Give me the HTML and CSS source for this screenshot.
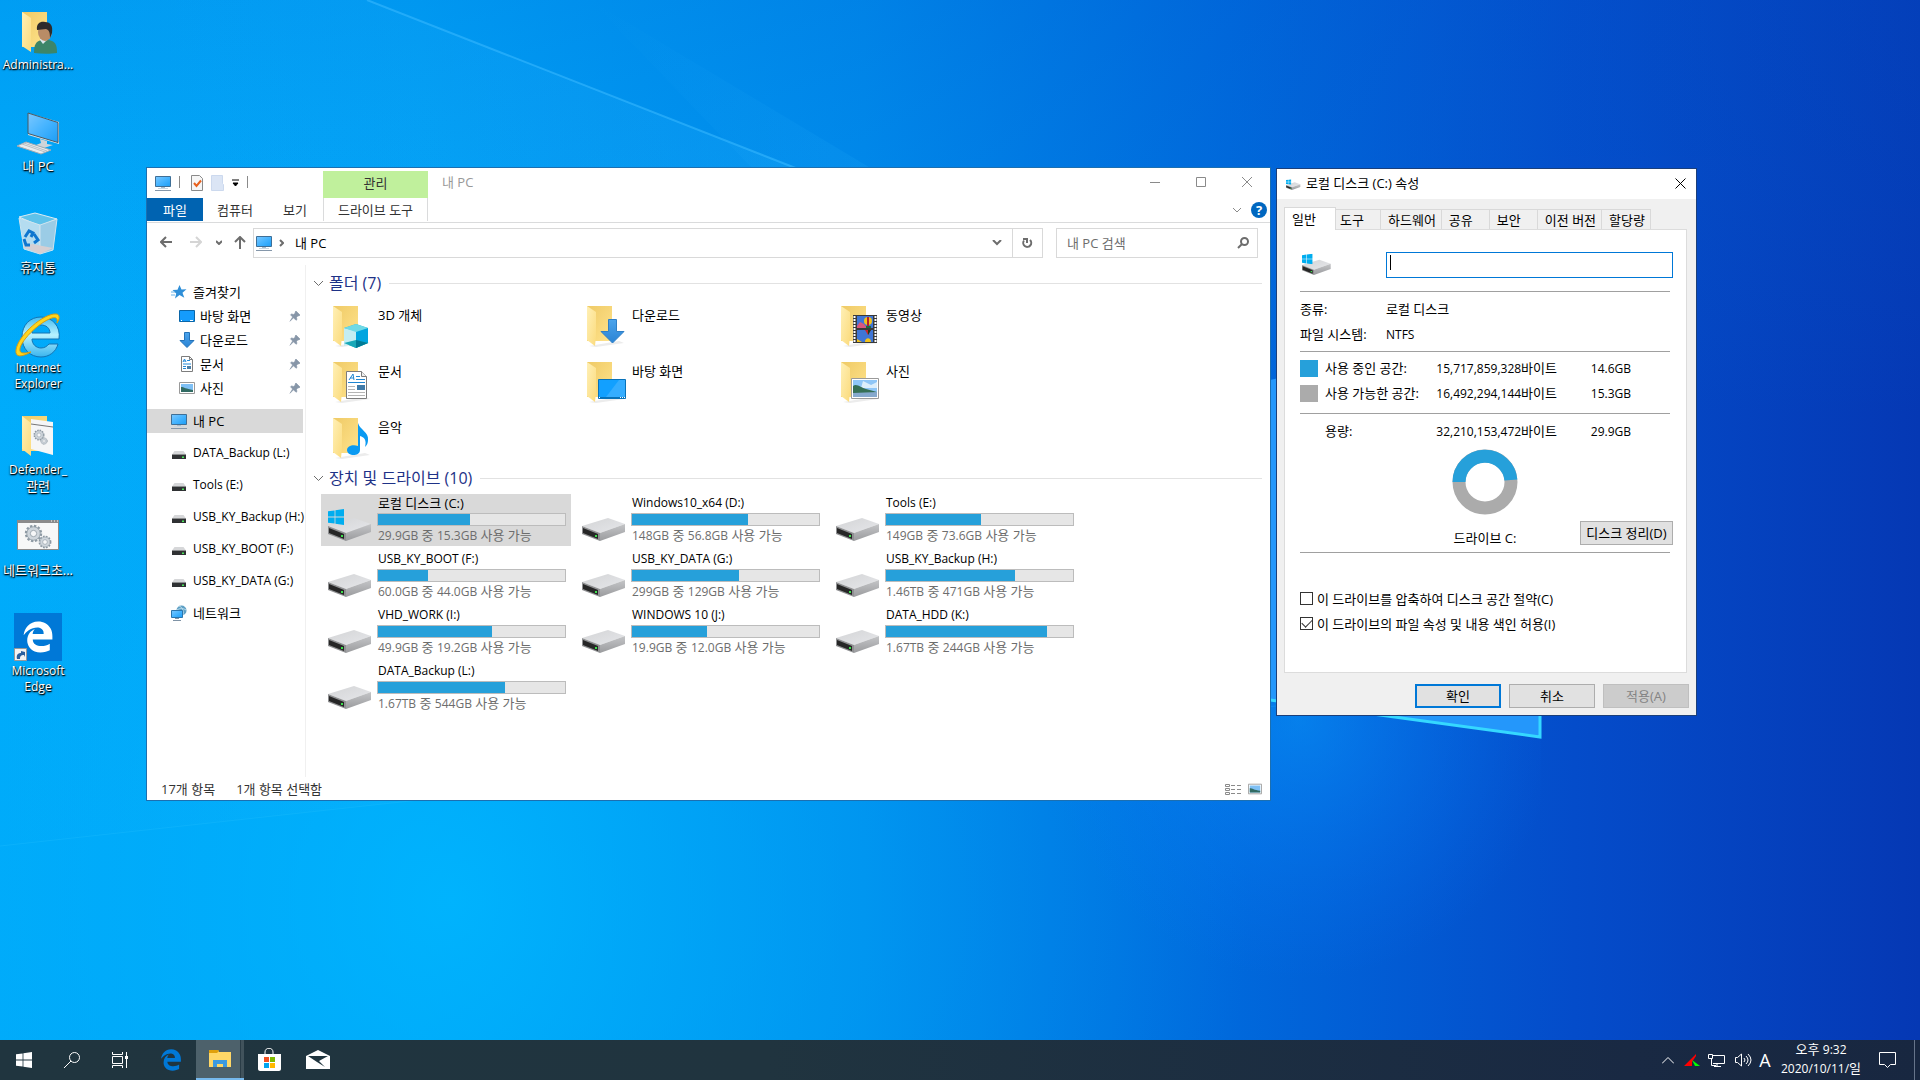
FILE: index.html
```html
<!DOCTYPE html>
<html lang="ko">
<head>
<meta charset="utf-8">
<title>내 PC</title>
<link rel="stylesheet" href="styles.css">
</head>
<body>
<svg class="defs" aria-hidden="true">
  <defs>
    <linearGradient id="gFold" x1="0" y1="0" x2="1" y2="1"><stop offset="0" stop-color="#efca66"/><stop offset="1" stop-color="#ffe38c"/></linearGradient>
    <linearGradient id="gFlap" x1="0" y1="0" x2="1" y2="1"><stop offset="0" stop-color="#fff0b6"/><stop offset="1" stop-color="#fbdb7d"/></linearGradient>
    <linearGradient id="gScreen" x1="0" y1="0" x2="1" y2="1"><stop offset="0" stop-color="#7cc8ff"/><stop offset=".5" stop-color="#46b4ff"/><stop offset="1" stop-color="#1c9df5"/></linearGradient>
    <linearGradient id="gTop" x1="0" y1="0" x2="1" y2="1"><stop offset="0" stop-color="#d3d4d6"/><stop offset="1" stop-color="#e6e7ea"/></linearGradient>
    <linearGradient id="gSide" x1="0" y1="0" x2="0" y2="1"><stop offset="0" stop-color="#c4c5c7"/><stop offset="1" stop-color="#9a9b9e"/></linearGradient>
    <linearGradient id="gIe" x1="0" y1="0" x2="0" y2="1"><stop offset="0" stop-color="#44bdf2"/><stop offset=".45" stop-color="#b8f2ff"/><stop offset="1" stop-color="#3ab5ee"/></linearGradient>
    <linearGradient id="gDown" x1="0" y1="0" x2="0" y2="1"><stop offset="0" stop-color="#4ba4ec"/><stop offset="1" stop-color="#2a83d4"/></linearGradient>
  </defs>
  <symbol id="pc" viewBox="0 0 16 16"><path d="M.5 1.500h15v10H.5z" fill="url(#gScreen)" stroke="#3f6f96"/><path d="M6 12h4v1.500H6z" fill="#a9bccb"/><path d="M3 13h10v1H3z" fill="#c9d6e0"/><path d="M0 15h16v1H0z" fill="#8597aa"/></symbol>
  <symbol id="folder" viewBox="0 0 48 48"><path d="M10 45l7 1 28-4-5-2z" fill="#ececec"/><path d="M8 5h25v35H8z" fill="url(#gFold)"/><path d="M8 5l9 6v24l-1 10-8-6z" fill="url(#gFlap)"/></symbol>
  <symbol id="drive" viewBox="0 0 48 48"><path d="M3 30l26-8 17 6-25 9z" fill="url(#gTop)"/><path d="M21 37l25-9v8l-25 9z" fill="url(#gSide)"/><path d="M3 30l18 7v8L3 38z" fill="#8f9092"/><path d="M4 32l15 6v5L4 37z" fill="#262626"/><path d="M16 39h2v2h-2z" fill="#3be04b"/></symbol>
  <symbol id="winflag" viewBox="0 0 16 16"><path d="M0 2.300l6.600-.9v6.200H0zM7.400 1.300L16 0v7.600H7.400zM0 8.400h6.600v6.200L0 13.700zM7.400 8.400H16V16l-8.600-1.300z"/></symbol>
  <symbol id="cdrive" viewBox="0 0 48 48"><use href="#drive"/><use href="#winflag" x="3" y="13" width="16" height="16" fill="#00adef"/></symbol>
  <symbol id="minidrive" viewBox="0 0 16 16"><path d="M2.500 6h9L14 9.500H0z" fill="#d6d7d9"/><path d="M0 9.500h14V14H0z" fill="#2f3133"/><path d="M10 11.500h2v1.500h-2z" fill="#4be35a"/></symbol>
  <symbol id="doc" viewBox="0 0 16 16"><path d="M2.500.5h8l3 3v12h-11z" fill="#fff" stroke="#7d7d7d"/><path d="M10.500.5v3h3" fill="none" stroke="#7d7d7d"/><path d="M4 6l1.500-3L7 6M4.500 5h2M8 4.500h3M4 8h8M4 10.500h3M4 12.500h3" stroke="#2389d8" fill="none"/><path d="M8 10h4v3H8z" fill="#4a7da5"/></symbol>
  <symbol id="pic" viewBox="0 0 16 16"><path d="M.5 2.500h15v11H.5z" fill="#fff" stroke="#999"/><path d="M2 4h12v8H2z" fill="#7fc0f5"/><path d="M2 7c3 0 5 2 12 3v2H2z" fill="#316b63"/></symbol>
  <symbol id="pin" viewBox="0 0 12 12"><path d="M7 1l4 4-1 1-1-.3L7.500 7.500 8 9.500l-1 .8-2.500-2.500L1 11.300 3.600 7 1.500 4.800l1-.8 2.200.4L6.300 3 6 2z" fill="#8796a8" stroke="#8796a8" stroke-width=".6"/></symbol>
  <symbol id="gear" viewBox="0 0 24 24"><circle cx="12" cy="12" r="9.500" fill="none" stroke="#8d99a3" stroke-width="3" stroke-dasharray="3 2"/><circle cx="12" cy="12" r="8.500" fill="#cfd6dc" stroke="#8d99a3"/><circle cx="12" cy="12" r="4" fill="#f6f7f8" stroke="#8d99a3"/></symbol>
  <symbol id="edge" viewBox="0 0 512 512"><path d="M25.700 228.200l.4-.5c0 .2 0 .3-.1.500zm460.600 15.500c0-44-7.800-84.500-28.800-122.400C416.500 47.900 343.900 8 258.900 8 119 7.700 40.600 113.200 26.100 227.700c42.400-61.300 117-121.400 220.300-125 0 0 109.700 0 99.400 105H170c6.400-37.400 18.500-59 34.300-78.900-75 34.900-121.800 96.100-120.700 188.300.8 71.500 50.100 144.800 120.700 172 83.400 31.800 192.800 7.200 240.200-21.300V363.300c-80.900 56.500-270.900 60.900-272.300-67.600h314.100z"/></symbol>
</svg>

<main class="desktop">
  <svg class="wallpaper" viewBox="0 0 1920 1040" preserveAspectRatio="none" aria-hidden="true">
    <defs>
      <linearGradient id="wBase" x1="0" y1="0" x2="1" y2="0"><stop offset="0" stop-color="#00aefc"/><stop offset=".22" stop-color="#00a6f8"/><stop offset=".45" stop-color="#008cec"/><stop offset=".64" stop-color="#0069dc"/><stop offset=".82" stop-color="#044cca"/><stop offset="1" stop-color="#0538b4"/></linearGradient>
      <linearGradient id="wTop" x1="0" y1="0" x2="0" y2="1"><stop offset="0" stop-color="#005cd0" stop-opacity=".2"/><stop offset=".4" stop-color="#0078dc" stop-opacity="0"/></linearGradient>
      <radialGradient id="wGlow" gradientUnits="userSpaceOnUse" cx="450" cy="900" r="800"><stop offset="0" stop-color="#00b8ff" stop-opacity=".75"/><stop offset="1" stop-color="#0098f0" stop-opacity="0"/></radialGradient>
      <linearGradient id="wRay" x1="0" y1="0" x2="1" y2="0"><stop offset="0" stop-color="#36b9ff" stop-opacity="0"/><stop offset="1" stop-color="#20b4ff" stop-opacity=".3"/></linearGradient>
      <radialGradient id="wPane" gradientUnits="userSpaceOnUse" cx="1300" cy="720" r="260"><stop offset="0" stop-color="#0a9cff" stop-opacity=".5"/><stop offset="1" stop-color="#0a7cff" stop-opacity="0"/></radialGradient>
    </defs>
    <path d="M0 0h1920v1040H0z" fill="url(#wBase)"/>
    <path d="M0 0h1920v1040H0z" fill="url(#wTop)"/>
    <path d="M0 0h1920v1040H0z" fill="url(#wGlow)"/>
    <path d="M367 0l904 355v351L0 846V0z" fill="url(#wRay)"/>
    <path d="M590 0l681 408v298z" fill="url(#wRay)"/>
    <path d="M367 0l500 196" stroke="#37b8ff" stroke-width="2" opacity=".6"/>
    <path d="M0 846l1276-140" stroke="#29c4ff" stroke-width="1" opacity=".25"/>
    <path d="M900 500h641v540H900z" fill="url(#wPane)"/>
    <path d="M1270 380l271-60v417l-271-37z" fill="#2497fb"/>
    <path d="M1270 700l270 37V600" fill="none" stroke="#35d8ff" stroke-width="3"/>
  </svg>

  <nav class="shortcuts" aria-label="바탕 화면">
    <a class="shortcut" href="#admin"><svg viewBox="0 0 48 48"><path d="M8 5h25v35H8z" fill="url(#gFold)"/><path d="M8 5l9 6v34l-9-6z" fill="url(#gFlap)"/><path d="M20 46c0-9 2-11 7-13l5-1 6 2c4 2 5 5 5 12-6 1-15 1-23 0z" fill="#3c8568"/><path d="M26 33l3 4 4-4v-5h-6z" fill="#dce7ec"/><ellipse cx="31" cy="25" rx="7" ry="9" fill="#b98c66"/><path d="M23 23c-1-7 4-9 8-8 6 0 8 4 7 11l-2 5c0-6-1-8-4-9-3 0-6 1-9 1z" fill="#2d2b2b"/></svg><span class="latin">Administra...</span></a>
    <a class="shortcut" href="#pc"><svg viewBox="0 0 48 48"><path d="M14 5l31 9v22l-31-9z" fill="#dfe3e6"/><path d="M14 5l30 9.500v20L14 25.500z" fill="url(#gScreen)" stroke="#4b5962"/><path d="M26 31l7 2v3l6 1-9 3-8-3 5-2z" fill="#cfd5d9"/><path d="M12 34l25 8-10 4L3 38z" fill="#e8ebed" stroke="#a2abb2"/><path d="M8 36l23 8M10 35l23 8" stroke="#b7bfc5"/></svg><span>내 PC</span></a>
    <a class="shortcut" href="#bin"><svg viewBox="0 0 48 48"><path d="M5 8l16-4 22 6-17 7z" fill="#5fc2ea" stroke="#dcebf3"/><path d="M5 9l21 7v29l-16-5z" fill="#b4dcf0" stroke="#cfe4ef"/><path d="M26 16l17-6-4 31-13 4z" fill="#9bcce6" stroke="#cfe4ef"/><path d="M9 38l9-3 21 4-13 6z" fill="#d6cfd2"/><path d="M11 28l4-6 4 2-2 4M20 25l4 6-4 3M10 30l2 6h4" stroke="#0f76cf" stroke-width="3" fill="none"/></svg><span>휴지통</span></a>
    <a class="shortcut" href="#ie"><svg viewBox="0 0 48 48"><path d="M45 29H18c0 5 4 9 9 9 4 0 6-2 8-4h9c-2 8-9 13-17 13-11 0-19-8-19-20S16 7 27 7s20 9 18 22zM18 23h18c0-5-4-8-9-8s-9 3-9 8z" fill="url(#gIe)" stroke="#1475b4"/><path d="M17 42C8 47 1 48 2 40 4 25 30 3 42 4c4 0 4 5 1 9 1-5-1-6-5-5C25 12 4 33 6 41c1 3 6 2 11 1z" fill="#ffd51d" stroke="#d79d10"/></svg><span class="latin">Internet Explorer</span></a>
    <a class="shortcut" href="#defender"><svg viewBox="0 0 48 48"><path d="M8 5h25v35H8z" fill="url(#gFold)"/><path d="M17 8l22 3v33l-22-6z" fill="#f5f6f7"/><path d="M17 13l22 3" stroke="#777"/><path d="M8 5l9 7v33l-9-7z" fill="url(#gFlap)"/><use href="#gear" x="19" y="18" width="12" height="12"/><use href="#gear" x="26" y="26" width="8" height="8"/></svg><span><i>Defender_</i><br>관련</span></a>
    <a class="shortcut" href="#net"><svg viewBox="0 0 48 48"><path d="M3.500 8.500h41v29h-41z" fill="#f7f8f8" stroke="#8b8b8b"/><path d="M3 8h42v3H3z" fill="#8b8b8b"/><path d="M37 9h1M40 9h1M43 9h1" stroke="#fff"/><use href="#gear" x="10" y="12" width="19" height="19"/><use href="#gear" x="24" y="23" width="14" height="14"/></svg><span>네트워크초...</span></a>
    <a class="shortcut" href="#edge"><svg viewBox="0 0 48 48"><path d="M0 0h48v48H0z" fill="#0078d7"/><use href="#edge" x="8" y="8" width="32" height="32" fill="#fff"/><path d="M.5 35.500h12v12H.5z" fill="#f3f3f3" stroke="#999"/><path d="M3 46c-1-4 1-6 4-6v-2l4 1v5l-1-2c-3 0-4 1-4 4z" fill="#2b5f9e"/></svg><span class="latin">Microsoft Edge</span></a>
  </nav>

  <section class="window explorer" aria-label="내 PC">
    <header class="titlebar">
      <div class="quick">
        <svg width="16" height="16"><use href="#pc"/></svg><b></b>
        <svg width="12" height="16" viewBox="0 0 12 16"><path d="M.5.5h8l3 3v12H.5z" fill="#f6f6f6" stroke="#8a8a8a"/><path d="M3 8l2.500 3L10 5.500" fill="none" stroke="#e8601c" stroke-width="2"/></svg>
        <svg width="13" height="16" viewBox="0 0 13 16"><path d="M.5.500h11v8l1 1v6H.5z" fill="#dbe5f5" stroke="#ccd9ee"/></svg>
        <svg width="7" height="8" viewBox="0 0 7 8"><path d="M0 1h7M1 4h5L3.500 7z" stroke="#000" fill="#000"/></svg><b></b>
      </div>
      <div class="manage">관리</div>
      <h1>내 PC</h1>
      <div class="controls">
        <button aria-label="최소화"><svg width="10" height="10" viewBox="0 0 10 10"><path d="M0 5.500h10" stroke="#8a8a8a"/></svg></button>
        <button aria-label="최대화"><svg width="10" height="10" viewBox="0 0 10 10"><path d="M.5.500h9v9h-9z" stroke="#8a8a8a" fill="none"/></svg></button>
        <button aria-label="닫기"><svg width="10" height="10" viewBox="0 0 10 10"><path d="M0 0l10 10M10 0L0 10" stroke="#8a8a8a"/></svg></button>
      </div>
    </header>
    <div class="ribbon">
      <button class="file">파일</button>
      <button class="computer">컴퓨터</button>
      <button class="view">보기</button>
      <button class="tools">드라이브 도구</button>
      <span class="ribbon-end">
        <svg width="10" height="6" viewBox="0 0 10 6"><path d="M1 1l4 4 4-4" stroke="#8a8a8a" fill="none"/></svg>
        <button class="help" aria-label="도움말">?</button>
      </span>
    </div>
    <div class="navbar">
      <button class="nav" aria-label="뒤로"><svg width="12" height="12" viewBox="0 0 12 12"><path d="M12 6H1M6 1L1 6l5 5" stroke="#6d6d6d" stroke-width="2" fill="none"/></svg></button>
      <button class="nav" aria-label="앞으로"><svg width="12" height="12" viewBox="0 0 12 12"><path d="M0 6h11M6 1l5 5-5 5" stroke="#d5d5d5" stroke-width="2" fill="none"/></svg></button>
      <button class="nav slim" aria-label="최근 위치"><svg width="6" height="5" viewBox="0 0 6 5"><path d="M0 1l3 3 3-3" stroke="#6d6d6d" stroke-width="2" fill="none"/></svg></button>
      <button class="nav up" aria-label="위로"><svg width="12" height="13" viewBox="0 0 12 13"><path d="M6 13V1M1 6l5-5 5 5" stroke="#6d6d6d" stroke-width="2" fill="none"/></svg></button>
      <div class="address">
        <svg width="16" height="16"><use href="#pc"/></svg>
        <svg width="5" height="8" viewBox="0 0 5 8"><path d="M1 1l3 3-3 3" stroke="#6d6d6d" stroke-width="2" fill="none"/></svg>
        <span>내 PC</span>
        <button class="nav" aria-label="이전 위치"><svg width="10" height="6" viewBox="0 0 10 6"><path d="M1 0l4 4 4-4" stroke="#6d6d6d" stroke-width="2" fill="none"/></svg></button>
        <button class="nav refresh" aria-label="새로 고침"><svg width="11" height="12" viewBox="0 0 11 12"><path d="M8 3a4 4 0 1 1-6 .5M1 2h4v4" stroke="#6d6d6d" stroke-width="2" fill="none"/></svg></button>
      </div>
      <div class="search">
        <input type="search" placeholder="내 PC 검색" aria-label="내 PC 검색">
        <svg width="12" height="12" viewBox="0 0 12 12"><circle cx="7.500" cy="4.500" r="3.500" stroke="#6d6d6d" stroke-width="2" fill="none"/><path d="M5 7l-4 4" stroke="#6d6d6d" stroke-width="2"/></svg>
      </div>
    </div>

    <div class="body">
      <nav class="tree" aria-label="탐색">
        <a href="#fav"><svg width="16" height="16" viewBox="0 0 16 16"><path d="M8.500 1l2 4.500 5-.3-4 3.600 1.800 5L8.500 11 4 14.500l1.200-5L1.500 6l5-.3z" fill="#2f8fd8"/><path d="M0 8h4M0 11h4" stroke="#69b4e8"/></svg>즐겨찾기</a>
        <a class="child" href="#desk"><svg width="16" height="16" viewBox="0 0 16 16"><path d="M.5 2.500h15v11H.5z" fill="#159cfc" stroke="#0a66a8"/><path d="M2 12.500h1M11 12.500h3" stroke="#fff"/></svg>바탕 화면<svg class="pin"><use href="#pin"/></svg></a>
        <a class="child" href="#down"><svg width="16" height="16" viewBox="0 0 16 16"><path d="M5.500.5h5v8h4.500l-7 7-7-7h4.500z" fill="url(#gDown)" stroke="#2372b8"/></svg>다운로드<svg class="pin"><use href="#pin"/></svg></a>
        <a class="child" href="#docs"><svg width="16" height="16"><use href="#doc"/></svg>문서<svg class="pin"><use href="#pin"/></svg></a>
        <a class="child" href="#pics"><svg width="16" height="16"><use href="#pic"/></svg>사진<svg class="pin"><use href="#pin"/></svg></a>
        <a class="current" href="#pc"><svg width="16" height="16"><use href="#pc"/></svg>내 PC</a>
        <a class="tall latin" href="#l"><svg width="16" height="16"><use href="#minidrive" x="1"/></svg>DATA_Backup (L:)</a>
        <a class="tall latin" href="#e"><svg width="16" height="16"><use href="#minidrive" x="1"/></svg>Tools (E:)</a>
        <a class="tall latin" href="#h"><svg width="16" height="16"><use href="#minidrive" x="1"/></svg>USB_KY_Backup (H:)</a>
        <a class="tall latin" href="#f"><svg width="16" height="16"><use href="#minidrive" x="1"/></svg>USB_KY_BOOT (F:)</a>
        <a class="tall latin" href="#g"><svg width="16" height="16"><use href="#minidrive" x="1"/></svg>USB_KY_DATA (G:)</a>
        <a class="tall" href="#network"><svg width="16" height="16" viewBox="0 0 16 16"><circle cx="10.500" cy="5.500" r="5" fill="#5d9fc4"/><path d="M8 1c3 1 5 4 4 9M6 5c3-2 6-2 9 0" stroke="#b9dced" fill="none"/><path d="M.5 5.500h11v7H.5z" fill="url(#gScreen)" stroke="#2a75ad"/><path d="M4 13h4v1H4zM2 15h8v1H2z" fill="#7f93a6"/></svg>네트워크</a>
      </nav>

      <div class="content">
        <h2><svg width="11" height="7" viewBox="0 0 11 7"><path d="M1 1l4.500 4.500L10 1" stroke="#6d6d6d" fill="none"/></svg>폴더 (7)</h2>
        <div class="tiles folders">
          <a class="tile" href="#3d"><svg class="big" viewBox="0 0 48 48"><use href="#folder"/><path d="M19 27l12-4 12 4v15l-12 5-12-5z" fill="#27b9cf"/><path d="M19 27l12 3v12l-12 3z" fill="#c3edf2"/><path d="M31 30l12-3v15l-12-2z" fill="#00a5e0"/><path d="M19 27l12-4 12 4-12 4z" fill="#6fd9e6"/><path d="M19 42l12-3 12 3-12 5z" fill="#18a8b8"/><path d="M31 39l12 3-12 5z" fill="#007b96"/></svg><span class="name">3D 개체</span></a>
          <a class="tile" href="#down"><svg class="big" viewBox="0 0 48 48"><use href="#folder"/><path d="M29.500 18.500h8v12h7.500L33.500 42 22 30.500h7.500z" fill="url(#gDown)" stroke="#2f7fc6"/></svg><span class="name">다운로드</span></a>
          <a class="tile" href="#video"><svg class="big" viewBox="0 0 48 48"><use href="#folder"/><path d="M20 14h24v28H20z" fill="#3a3a3a"/><path d="M21.500 15v26M42.500 15v26" stroke="#fff" stroke-width="2" stroke-dasharray="2 1"/><path d="M24 15h16v12H24zM24 29h16v12H24z" fill="#3f76d6"/><path d="M24 25l3-4 4 2 3 4H24z" fill="#d8577d"/><circle cx="35" cy="20" r="4" fill="#f2c21c"/><path d="M35 16v8M34 25h2" stroke="#b3202c" stroke-width="2"/><path d="M33 25h5v2h-5z" fill="#1c6b3a"/><path d="M32 29h6l-3 5z" fill="#c9252c"/><path d="M35 29h3l-3 5z" fill="#1d3c1c"/><path d="M32 41c0-5 6-5 6 0zM24 38l5 3h-5z" fill="#f2c21c"/></svg><span class="name">동영상</span></a>
          <a class="tile" href="#docs"><svg class="big" viewBox="0 0 48 48"><use href="#folder"/><path d="M21.500 14.500h15l5 5v22h-20z" fill="#fff" stroke="#7c7c7c"/><path d="M36.500 14.500v5h5" fill="#eee" stroke="#7c7c7c"/><path d="M24 23l4-6 1 6M25 21h4M31 19.500h4M31 22.500h9M23 25.500h17" stroke="#1f86d2" fill="none"/><path d="M23 29.500h7M23 32.500h7M23 35.500h17M23 38.500h17" stroke="#b5b5b5"/><path d="M32 28h8v5h-8z" fill="#3f7aa8"/></svg><span class="name">문서</span></a>
          <a class="tile" href="#desk"><svg class="big" viewBox="0 0 48 48"><use href="#folder"/><path d="M19.500 22.500h27v19h-27z" fill="#12a0ff" stroke="#0872b9"/><path d="M27 40l13-17h6v17z" fill="#35adff"/><path d="M20 40.500h26" stroke="#0872b9"/><path d="M20 40.500h1M41 40.500h1M43 40.500h1M45 40.500h1" stroke="#fff"/></svg><span class="name">바탕 화면</span></a>
          <a class="tile" href="#pics"><svg class="big" viewBox="0 0 48 48"><use href="#folder"/><path d="M18.500 21.500h27v20h-27z" fill="#fff" stroke="#9a9a9a"/><path d="M20 23h24v17H20z" fill="#8fc6f7"/><path d="M30 24l8 4 6-3v6H28z" fill="#dceefb"/><path d="M20 29c4-3 8 2 13 3l11 3v2H20z" fill="#356f55"/><path d="M20 36l24-1v5H20z" fill="#86a9cd"/></svg><span class="name">사진</span></a>
          <a class="tile" href="#music"><svg class="big" viewBox="0 0 48 48"><use href="#folder"/><path d="M33 10c2 7 11 9 10 17 0 3-1 5-3 7 2-7-1-10-5-11v14c0 4-4 5-6 5-4 0-7-2-7-5 0-4 6-6 11-4z" fill="#0a9af2"/></svg><span class="name">음악</span></a>
        </div>

        <h2><svg width="11" height="7" viewBox="0 0 11 7"><path d="M1 1l4.500 4.500L10 1" stroke="#6d6d6d" fill="none"/></svg>장치 및 드라이브 (10)</h2>
        <div class="tiles">
          <a class="tile selected" href="#c"><svg class="big"><use href="#cdrive"/></svg><span class="name">로컬 디스크 (C:)</span><span class="bar"><b style="width:49%"></b></span><small><i>29.9GB</i> 중 <i>15.3GB</i> 사용 가능</small></a>
          <a class="tile" href="#d"><svg class="big"><use href="#drive"/></svg><span class="name latin">Windows10_x64 (D:)</span><span class="bar"><b style="width:62%"></b></span><small><i>148GB</i> 중 <i>56.8GB</i> 사용 가능</small></a>
          <a class="tile" href="#e"><svg class="big"><use href="#drive"/></svg><span class="name latin">Tools (E:)</span><span class="bar"><b style="width:51%"></b></span><small><i>149GB</i> 중 <i>73.6GB</i> 사용 가능</small></a>
          <a class="tile" href="#f"><svg class="big"><use href="#drive"/></svg><span class="name latin">USB_KY_BOOT (F:)</span><span class="bar"><b style="width:27%"></b></span><small><i>60.0GB</i> 중 <i>44.0GB</i> 사용 가능</small></a>
          <a class="tile" href="#g"><svg class="big"><use href="#drive"/></svg><span class="name latin">USB_KY_DATA (G:)</span><span class="bar"><b style="width:57%"></b></span><small><i>299GB</i> 중 <i>129GB</i> 사용 가능</small></a>
          <a class="tile" href="#h"><svg class="big"><use href="#drive"/></svg><span class="name latin">USB_KY_Backup (H:)</span><span class="bar"><b style="width:69%"></b></span><small><i>1.46TB</i> 중 <i>471GB</i> 사용 가능</small></a>
          <a class="tile" href="#i"><svg class="big"><use href="#drive"/></svg><span class="name latin">VHD_WORK (I:)</span><span class="bar"><b style="width:61%"></b></span><small><i>49.9GB</i> 중 <i>19.2GB</i> 사용 가능</small></a>
          <a class="tile" href="#j"><svg class="big"><use href="#drive"/></svg><span class="name latin">WINDOWS 10 (J:)</span><span class="bar"><b style="width:40%"></b></span><small><i>19.9GB</i> 중 <i>12.0GB</i> 사용 가능</small></a>
          <a class="tile" href="#k"><svg class="big"><use href="#drive"/></svg><span class="name latin">DATA_HDD (K:)</span><span class="bar"><b style="width:86%"></b></span><small><i>1.67TB</i> 중 <i>244GB</i> 사용 가능</small></a>
          <a class="tile" href="#l"><svg class="big"><use href="#drive"/></svg><span class="name latin">DATA_Backup (L:)</span><span class="bar"><b style="width:68%"></b></span><small><i>1.67TB</i> 중 <i>544GB</i> 사용 가능</small></a>
        </div>
      </div>
    </div>
    <footer class="status">
      <span>17개 항목</span><span>1개 항목 선택함</span>
      <svg width="17" height="12" viewBox="0 0 17 12"><path d="M.5 1.500h4v2h-4zM.5 5.500h4v2h-4zM.5 9.500h4v2h-4zM6 2.500h4M6 6.500h4M6 10.500h4M12 2.500h4M12 6.500h4M12 10.500h4" fill="none" stroke="#8a8a8a"/></svg>
      <svg width="14" height="14"><use href="#pic"/></svg>
    </footer>
  </section>

  <section class="window dialog" aria-label="로컬 디스크 (C:) 속성">
    <header class="dialog-title">
      <svg width="16" height="16"><use href="#cdrive"/></svg>
      <h1>로컬 디스크 (C:) 속성</h1>
      <button aria-label="닫기"><svg width="11" height="11" viewBox="0 0 11 11"><path d="M.5.500l10 10M10.500.500l-10 10" stroke="#000"/></svg></button>
    </header>
    <div class="tabs" role="tablist">
      <button role="tab" aria-selected="true" class="on">일반</button><button role="tab">도구</button><button role="tab">하드웨어</button><button role="tab">공유</button><button role="tab">보안</button><button role="tab">이전 버전</button><button role="tab">할당량</button>
    </div>
    <div class="panel">
      <div class="volume">
        <svg width="32" height="32"><use href="#cdrive"/></svg>
        <div class="field"><input type="text" aria-label="볼륨 레이블"><b class="caret"></b></div>
      </div>
      <dl>
        <dt>종류:</dt><dd>로컬 디스크</dd>
        <dt>파일 시스템:</dt><dd class="latin">NTFS</dd>
      </dl>
      <table>
        <tr><td class="key"><b class="swatch used"></b></td><th scope="row">사용 중인 공간:</th><td class="bytes"><i>15,717,859,328</i>바이트</td><td class="gb">14.6GB</td><td></td></tr>
        <tr class="second"><td class="key"><b class="swatch free"></b></td><th scope="row">사용 가능한 공간:</th><td class="bytes"><i>16,492,294,144</i>바이트</td><td class="gb">15.3GB</td><td></td></tr>
        <tr class="total"><td></td><th scope="row">용량:</th><td class="bytes"><i>32,210,153,472</i>바이트</td><td class="gb">29.9GB</td><td></td></tr>
      </table>
      <div class="chart">
        <svg width="66" height="66" viewBox="0 0 66 66"><circle cx="33" cy="33" r="26" fill="none" stroke="#ababab" stroke-width="13"/><path d="M7 33a26 26 0 0 1 51.900-2" fill="none" stroke="#26a0da" stroke-width="13"/></svg>
      </div>
      <div class="drive-row"><span>드라이브 C:</span><button class="push">디스크 정리(D)</button></div>
      <div class="checks">
        <label><input type="checkbox">이 드라이브를 압축하여 디스크 공간 절약(C)</label>
        <label><input type="checkbox" checked>이 드라이브의 파일 속성 및 내용 색인 허용(I)</label>
      </div>
    </div>
    <div class="actions">
      <button class="push default">확인</button><button class="push">취소</button><button class="push" disabled>적용(A)</button>
    </div>
  </section>
</main>

<footer class="taskbar">
  <button aria-label="시작"><svg width="16" height="16" fill="#fff"><use href="#winflag"/></svg></button>
  <button aria-label="검색"><svg width="16" height="16" viewBox="0 0 16 16"><circle cx="10.500" cy="5.500" r="5" stroke="#fff" fill="none"/><path d="M7 9l-7 7" stroke="#fff"/></svg></button>
  <button aria-label="작업 보기"><svg width="16" height="16" viewBox="0 0 16 16"><path d="M.5 4.500h10v7H.5zM.5 0v2.500h10V0M.5 16v-2.500h10V16M14.500 0v16" stroke="#fff" fill="none"/><path d="M13 4h3v3h-3z" fill="#fff"/></svg></button>
  <button class="app" aria-label="Edge"><svg width="22" height="22" fill="#0078d7"><use href="#edge"/></svg></button>
  <button class="app running" aria-label="파일 탐색기"><svg width="22" height="18" viewBox="0 0 22 18"><path d="M0 0h9l1 2h12v15H0z" fill="#ffd767"/><path d="M0 0h9l1 1-2 2H0z" fill="#e0a00c"/><path d="M4 17v-7h14v7h-4v-3H8v3z" fill="#3d9ae0"/></svg></button>
  <button class="app" aria-label="Store"><svg width="24" height="24" viewBox="0 0 24 24"><path d="M8 7V4c0-5 8-5 8 0v3" fill="none" stroke="#fff"/><path d="M1 6h23v15c0 1-1 2-2 2H3c-1 0-2-1-2-2z" fill="#fff"/><path d="M7 9h5v5H7z" fill="#f25022"/><path d="M13 9h5v5h-5z" fill="#7fba00"/><path d="M7 15h5v5H7z" fill="#00a4ef"/><path d="M13 15h5v5h-5z" fill="#ffb900"/></svg></button>
  <button class="app" aria-label="메일"><svg width="24" height="20" viewBox="0 0 24 20"><path d="M0 6l12-6 12 6v13H0z" fill="#fff"/><path d="M2 6h20l-9 5 6 6-8-5z" fill="#20353f"/></svg></button>
  <div class="tray">
    <button aria-label="숨겨진 아이콘"><svg width="12" height="7" viewBox="0 0 12 7"><path d="M0 6.500l6-6 6 6" stroke="#fff" fill="none"/></svg></button>
    <button aria-label="AMD"><svg width="16" height="13" viewBox="0 0 16 13"><path d="M0 12L12 0v2L8 8v4z" fill="#f00"/><path d="M8 6l8 6h-5z" fill="#0f0"/></svg></button>
    <button aria-label="네트워크"><svg width="17" height="13" viewBox="0 0 17 13"><path d="M5 1.500h11.500v8H5M3.500 5v6.500H8M9 10v2.500M6 12.500h7M.5.500h4v4h-4z" stroke="#fff" fill="none"/></svg></button>
    <button aria-label="볼륨"><svg width="17" height="14" viewBox="0 0 17 14"><path d="M.5 4.500h2l4-3.500v12l-4-3.500h-2zM9 5q2 2 0 4M11 3q4 4 0 8M13 1q6 6 0 12" stroke="#fff" fill="none"/></svg></button>
    <button class="ime" aria-label="입력기">A</button>
    <button class="clock"><span>오후 <i>9:32</i></span><span><i>2020/10/11/</i>일</span></button>
    <button class="notify" aria-label="알림"><svg width="17" height="16" viewBox="0 0 17 16"><path d="M.5.500h16v12h-5l-3 3-3-3h-5z" stroke="#fff" fill="none"/></svg></button>
  </div>
</footer>
</body>
</html>
```
FILE: styles.css
```css
* { box-sizing: border-box; }
body {
  margin: 0;
  min-height: 100vh;
  display: flex;
  flex-direction: column;
  font: 13px/18px "Open Sans", "Noto Sans CJK KR", sans-serif;
  color: #000;
}
button, input { font: inherit; color: inherit; }
button { margin: 0; padding: 0; border: 0; background: none; white-space: nowrap; }
a { color: inherit; text-decoration: none; }
h1, h2 { margin: 0; font-weight: 400; }
svg { display: block; flex: none; }
.defs { position: absolute; width: 0; height: 0; }

/* Latin letters and digits run a size smaller than the Hangul */
.latin, i { font-size: 12px; font-style: normal; }

/* Desktop */
.desktop { position: relative; flex: 1; overflow: hidden; min-height: 840px; }
.wallpaper { position: absolute; left: 0; top: 0; width: 100%; height: 100%; }
.shortcuts { position: relative; width: 76px; padding-top: 7px; }
.shortcut {
  display: flex;
  flex-direction: column;
  align-items: center;
  height: 101px;
  color: #fff;
  text-align: center;
  line-height: 16px;
  text-shadow: 0 1px 2px #000, 1px 1px 1px #000;
}
.shortcut svg { width: 48px; height: 48px; margin-bottom: 2px; }

/* Windows */
.window { position: absolute; display: flex; flex-direction: column; }
.explorer { left: 146px; right: 649px; top: 167px; background: #fff; border: 1px solid #1c6fb0; }
.titlebar { display: flex; height: 30px; }
.quick { display: flex; align-items: center; width: 176px; padding-left: 8px; gap: 8px; }
.quick b { width: 1px; height: 12px; margin: 0 3px 2px 0; background: #8a8a8a; }
.manage { width: 105px; margin-top: 3px; background: #c0f09c; text-align: center; line-height: 25px; color: #333; }
.titlebar h1 { flex: 1; padding-left: 14px; font-size: 13px; line-height: 28px; color: #999; }
.controls { display: flex; }
.controls button { width: 46px; height: 28px; display: grid; place-items: center; }
.ribbon { display: flex; height: 25px; padding-bottom: 1px; border-bottom: 1px solid #dadbdc; color: #333; }
.ribbon .file { width: 56px; background: #0063b1; color: #fff; }
.ribbon .computer { width: 64px; }
.ribbon .view { width: 56px; }
.ribbon .tools { width: 105px; border: solid #dadbdc; border-width: 0 1px; }
.ribbon-end { display: flex; align-items: center; gap: 9px; margin-left: auto; padding-right: 3px; }
.ribbon .help { width: 16px; height: 16px; border-radius: 50%; background: #0067c0; color: #fff; font-weight: 700; line-height: 16px; }
.navbar { display: flex; align-items: flex-start; height: 42px; padding: 5px 12px 0 4px; }
.nav { display: grid; place-items: center; width: 30px; height: 28px; }
.nav.slim { width: 16px; }
.nav.up { width: 26px; }
.address { display: flex; align-items: center; flex: 1; height: 30px; padding-left: 2px; border: 1px solid #d9d9d9; }
.address svg + svg { margin: 0 11px 0 7px; }
.address span { flex: 1; }
.address .refresh { border-left: 1px solid #d9d9d9; }
.search { display: flex; align-items: center; width: 202px; height: 30px; margin-left: 13px; padding: 0 8px 0 10px; border: 1px solid #d9d9d9; }
.search input { flex: 1; min-width: 0; padding: 0; border: 0; outline: 0; background: none; }
.search input::placeholder { color: #6d6d6d; opacity: 1; }

.body { display: flex; flex: 1; }
.tree { width: 158px; padding-top: 15px; }
.tree a { display: flex; align-items: center; gap: 6px; height: 24px; padding-left: 24px; white-space: nowrap; }
.tree .child { gap: 5px; padding: 0 4px 0 32px; }
.tree .pin { width: 12px; height: 12px; margin-left: auto; }
.tree .current { width: 156px; margin: 9px 0 4px; background: #d9d9d9; }
.tree .tall { height: 32px; }
.content { flex: 1; border-left: 1px solid #f0f0f0; padding: 6px 8px 63px 7px; }
.content h2 { display: flex; align-items: center; gap: 5px; height: 24px; font-size: 16px; color: #1e3287; }
.content h2::after { content: ""; flex: 1; height: 1px; margin-left: 3px; background: #e2e2e2; }
.tiles { display: grid; grid-template-columns: repeat(auto-fill, 250px); grid-auto-rows: 52px; gap: 4px; padding: 4px 0 3px 8px; }
.tiles:last-child { padding-bottom: 0; }
.tile { display: grid; grid-template-columns: 52px 189px; grid-template-rows: 19px 13px 18px; column-gap: 4px; }
.tile .big { grid-row: 1 / 4; width: 48px; height: 48px; margin: 2px 0 0 4px; }
.tile .name { padding-left: 1px; }
.folders .name { padding-top: 7px; }
.tile small { grid-column: 2; padding-left: 1px; font-size: 13px; color: #6d6d6d; }
.bar { grid-column: 2; display: block; border: 1px solid #bcbcbc; background: #e6e6e6; }
.bar b { display: block; height: 100%; background: #26a0da; }
.selected { background: #d9d9d9; }
.status { display: flex; align-items: center; height: 23px; padding: 0 8px 0 14px; color: #333; }
.status span { margin-right: 21px; }
.status span + span { margin-right: auto; }
.status svg + svg { margin-left: 6px; }

/* Properties dialog */
.dialog { right: 223px; top: 168px; width: 421px; background: #f0f0f0; border: 1px solid #1b3f7a; }
.dialog-title { display: flex; align-items: center; height: 30px; padding: 0 10px 2px 8px; background: #fff; }
.dialog-title h1 { flex: 1; padding-left: 5px; font-size: 13px; }
.tabs { display: flex; align-items: flex-end; height: 30px; padding-left: 7px; }
.tabs button {
  min-width: 48px;
  height: 20px;
  padding: 0 5px 0 7px;
  border: 1px solid #d9d9d9;
  border-width: 1px 1px 0 0;
  text-align: left;
  line-height: 18px;
}
.tabs .on { position: relative; z-index: 1; min-width: 52px; height: 23px; margin: 0 -3px -1px 0; border-left-width: 1px; background: #fff; line-height: 20px; }
.panel { margin: 0 9px 0 7px; padding: 0 13px 36px 15px; border: 1px solid #dcdcdc; background: #fff; }
.volume { display: flex; padding: 22px 0 13px; }
.volume svg { margin: -7px 54px 0 0; height: 32px; }
.field { position: relative; flex: 1; }
.field input { display: block; width: 100%; height: 26px; border: 1px solid #0078d7; outline: 0; padding: 0 4px; background: #fff; }
.caret { position: absolute; left: 4px; top: 3px; width: 1px; height: 15px; background: #000; }
dl { display: grid; grid-template-columns: 86px 1fr; margin: 0 3px 0 0; padding: 5px 0 4px; border: solid #a0a0a0; border-width: 1px 0; line-height: 25px; }
dd { margin: 0; }
table { width: 370px; margin-top: 4px; border-collapse: separate; border-spacing: 0; table-layout: fixed; line-height: 25px; white-space: nowrap; }
td, th { padding: 0; text-align: left; font-weight: 400; }
.key { width: 25px; }
th { width: 108px; }
.bytes { width: 124px; text-align: right; }
.gb { width: 74px; text-align: right; font-size: 12px; }
.swatch { display: block; width: 18px; height: 17px; }
.used { background: #26a0da; }
.free { background: #ababab; }
.second td, .second th { padding-bottom: 7px; }
.total td, .total th { border-top: 1px solid #a0a0a0; line-height: 35px; }
.chart { display: flex; justify-content: center; margin-right: 3px; }
.drive-row { display: grid; grid-template-columns: 1fr auto 1fr; height: 37px; margin-right: 3px; line-height: 46px; }
.drive-row span { grid-column: 2; }
.drive-row .push { width: 93px; margin: 6px -3px 0 0; justify-self: end; }
.push { width: 86px; height: 24px; border: 1px solid #adadad; background: #e1e1e1; line-height: 20px; }
.push.default { border: 2px solid #0078d7; }
.push:disabled { background: #ccc; border-color: #bfbfbf; color: #838383; }
.checks { margin-right: 3px; padding-top: 33px; border-top: 1px solid #a0a0a0; }
.checks label { display: flex; align-items: center; gap: 4px; height: 25px; }
.checks input { appearance: none; width: 13px; height: 13px; margin: 0; border: 1px solid #333; background: #fff; }
.checks input:checked::after { content: ""; display: block; width: 9px; height: 5px; margin: 1px; border: solid #333; border-width: 0 0 1px 1px; transform: rotate(-45deg); }
.actions { display: flex; justify-content: flex-end; gap: 8px; padding: 11px 7px 7px; }

/* Taskbar */
.taskbar { display: flex; height: 40px; background: linear-gradient(90deg, #20353f, #20343f 40%, #192943 85%, #182740); color: #fff; }
.taskbar button { display: grid; place-items: center; width: 48px; height: 40px; }
.taskbar .app { margin-right: 1px; }
.taskbar button:nth-child(4) { margin-left: 3px; }
.taskbar .running { background: linear-gradient(90deg, #4d616b 44px, #2a3d47 44px, #2a3d47 45px, #41535c 45px); border-bottom: 2px solid #76b9ed; }
.tray { display: flex; margin-left: auto; padding-right: 5px; }
.tray button { width: 24px; }
.tray .ime { font-size: 18px; width: 20px; }
.tray .clock { width: 92px; align-content: center; line-height: 18px; padding-bottom: 2px; }
.tray .notify { width: 48px; border-right: 1px solid #66748a; padding-right: 7px; }
```
